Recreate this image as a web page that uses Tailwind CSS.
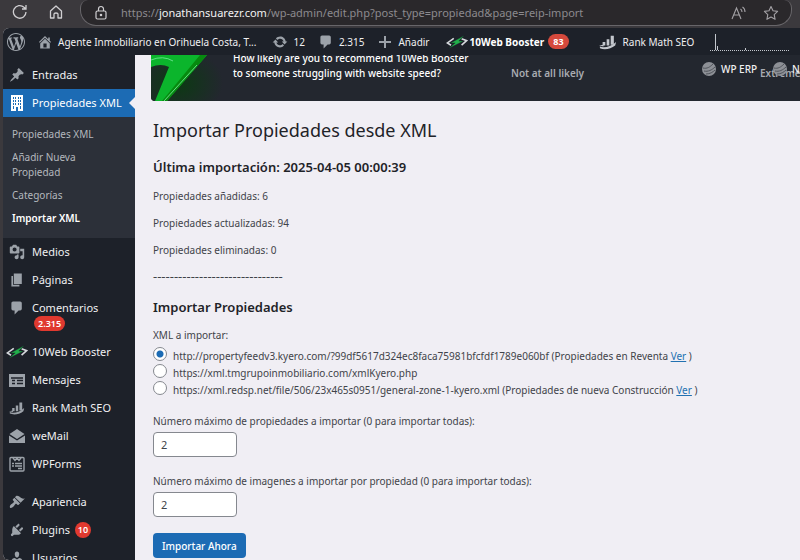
<!DOCTYPE html>
<html lang="es">

<head>
    <meta charset="UTF-8">
    <meta name="viewport" content="width=device-width, initial-scale=1.0">
    <script src="https://cdn.jsdelivr.net/npm/@tailwindcss/browser@4"></script>
    <title>Importar Propiedades desde XML</title>
</head>

<body class="h-screen overflow-hidden flex flex-col bg-[#3b393d] font-['Noto_Sans',sans-serif] text-[10px] leading-4 text-[#3f4349]">

    <!-- shared icons -->
    <svg class="hidden">
        <symbol id="bolt" viewBox="0 0 24 14">
            <path d="M8.500 3 1.500 8l4 2.500M17 3.500l5.500 2L17 10.500" fill="none" stroke="#d5d8dc" stroke-width="1.8" />
            <path d="M20 0 5 8h5L3 14l16-8h-5z" fill="#22b04b" stroke="#1d2129" stroke-width=".4" />
        </symbol>
        <symbol id="rank" viewBox="0 0 20 16">
            <path d="M4 8h3v4H4zM8.500 5h3v7h-3zM13 1h3.500v10H13z" />
            <path d="M1 13c4 2 11 1 18-5l-1 4c-5 4-12 5-17 3zM0 12l5-1v2z" />
        </symbol>
        <symbol id="comment" viewBox="0 0 20 20">
            <path d="M5 2h9c1.100 0 2 .9 2 2v7c0 1.100-.9 2-2 2h-2l-5 5v-5H5c-1.100 0-2-.9-2-2V4c0-1.100.9-2 2-2z" />
        </symbol>
        <symbol id="erp" viewBox="0 0 14 14">
            <circle cx="7" cy="7" r="7" fill="#8d9096" />
            <path d="M1 6c4 1 7-1 10-4M2 9c4 1 8-1 11-4M4 12c4 0 7-2 9-4" fill="none" stroke="#50545b" />
        </symbol>
    </svg>

    <!-- browser bar -->
    <div class="h-7 shrink-0 flex items-start gap-4 pl-3 pr-2">
        <div class="flex gap-5 pt-1 text-[#d0cfd2]">
            <button aria-label="Actualizar">
                <svg class="size-4" viewBox="0 0 16 16" fill="none" stroke="currentColor" stroke-width="1.3"><path d="M14 8a6.300 6.300 0 1 1-2-4.700L14 5M14 1v4h-4" /></svg>
            </button>
            <button aria-label="Inicio">
                <svg class="size-4" viewBox="0 0 16 16" fill="none" stroke="currentColor" stroke-width="1.3" stroke-linejoin="round"><path d="M2.500 7 8 2l5.500 5v7H10v-4q0-1-2-1t-2 1v4H2.500z" /></svg>
            </button>
        </div>
        <div class="flex-1 h-[26px] rounded-b-2xl rounded-t-lg border border-t-0 border-[#68666a] bg-[#2a282b] flex items-center pl-3 pr-3">
            <svg class="size-4 text-[#d0cfd2]" viewBox="0 0 16 16" fill="none" stroke="currentColor" stroke-width="1.2"><rect x="3" y="6" width="10" height="8" rx="1.500" /><path d="M5.500 6V4a2.500 2.500 0 0 1 5 0v2" /><circle cx="8" cy="10" r=".7" fill="currentColor" /></svg>
            <span class="ml-3 text-[11px] text-[#8c8a8e]">https://<span class="text-[#f2f2f2]">jonathansuarezr.com</span>/wp-admin/edit.php?post_type=propiedad&amp;page=reip-import</span>
            <div class="ml-auto flex gap-4 text-[#a3a1a5]">
                <button aria-label="Leer en voz alta">
                    <svg class="size-4" viewBox="0 0 16 16" fill="none" stroke="currentColor" stroke-width="1.1"><path d="M1 14 5.500 3 10 14M2.600 10h5.800M9.500 4q1.500 1 1.500 3M11.500 2q2.500 1.500 2.500 5" /></svg>
                </button>
                <button aria-label="Favoritos">
                    <svg class="size-4" viewBox="0 0 16 16" fill="none" stroke="currentColor" stroke-width="1.1" stroke-linejoin="round"><path d="m8 1.500 2 4.300 4.600.6-3.400 3.200.9 4.700L8 12l-4.100 2.300.9-4.700L1.400 6.400 6 5.800z" /></svg>
                </button>
            </div>
        </div>
    </div>

    <div class="flex-1 min-h-0 ml-[3px] flex flex-col rounded-l-md overflow-hidden bg-[#f0eef4]">

        <!-- admin bar -->
        <header class="relative z-10 h-[27px] shrink-0 flex items-center bg-[#1d2129] pl-1 text-[#f0f0f1] whitespace-nowrap">
            <a href="#" aria-label="WordPress" class="text-[#9ca2a9]">
                <svg class="size-[18px]" viewBox="0 0 20 20" fill="currentColor"><path d="M20 10c0-5.510-4.490-10-10-10C4.480 0 0 4.490 0 10c0 5.520 4.480 10 10 10 5.510 0 10-4.480 10-10zM7.780 15.370L4.370 6.220c.55-.02 1.170-.08 1.170-.08.5-.06.44-1.130-.06-1.110 0 0-1.450.11-2.370.11-.18 0-.37 0-.58-.01C4.120 2.690 6.870 1.110 10 1.110c2.330 0 4.450.87 6.050 2.340-.68-.11-1.650.39-1.650 1.580 0 .74.45 1.360.9 2.100.35.61.55 1.360.55 2.460 0 1.490-1.400 5-1.400 5l-3.030-8.370c.54-.02.82-.17.82-.17.5-.05.44-1.250-.06-1.220 0 0-1.440.12-2.380.12-.87 0-2.330-.12-2.330-.12-.5-.03-.56 1.200-.06 1.220l.92.08 1.260 3.410zM17.410 10c.24-.64.74-1.870.43-4.250.7 1.290 1.050 2.710 1.050 4.250 0 3.290-1.730 6.240-4.400 7.780.97-2.590 1.940-5.200 2.920-7.780zM6.100 18.090C3.120 16.650 1.110 13.530 1.110 10c0-1.300.23-2.480.72-3.590C3.250 10.300 4.670 14.200 6.100 18.090zm4.030-6.630l2.580 6.980c-.86.29-1.760.45-2.710.45-.79 0-1.570-.11-2.290-.33.81-2.380 1.620-4.740 2.420-7.100z" /></svg>
            </a>
            <a href="#" class="ml-3 flex items-center gap-[5px]">
                <svg class="size-4 text-[#9ca2a9]" viewBox="0 0 20 20" fill="currentColor"><path d="M16 8.500l1.530 1.530-1.060 1.060L10 4.600l-6.470 6.490-1.060-1.060L10 2.500l4 4v-2h2v4zm-6-2.460l6 5.990V18H4v-5.970zM12 17v-5H8v5h4z" /></svg>
                Agente Inmobiliario en Orihuela Costa, T...
            </a>
            <a href="#" class="ml-4 flex items-center gap-[5px]">
                <svg class="size-4 text-[#9ca2a9]" viewBox="0 0 20 20" fill="currentColor"><path d="M10.200 3.280c3.530 0 6.430 2.610 6.920 6h2.080l-3.500 4-3.500-4h2.320c-.45-1.970-2.210-3.450-4.320-3.450-1.450 0-2.730.71-3.540 1.780L4.950 5.660C6.230 4.200 8.110 3.280 10.200 3.280zm-.4 13.440c-3.520 0-6.430-2.610-6.920-6H.8l3.500-4c1.170 1.330 2.330 2.670 3.500 4H5.480c.45 1.970 2.210 3.450 4.320 3.450 1.450 0 2.730-.71 3.540-1.780l1.710 1.950c-1.280 1.460-3.150 2.380-5.250 2.380z" /></svg>
                12
            </a>
            <a href="#" class="ml-[13px] flex items-center gap-[5px]">
                <svg class="size-4 text-[#9ca2a9]" fill="currentColor"><use href="#comment" /></svg>
                2.315
            </a>
            <a href="#" class="ml-[13px] flex items-center gap-[5px]">
                <svg class="size-4 text-[#9ca2a9]" viewBox="0 0 16 16" fill="currentColor"><path d="M7 2h2v5h5v2H9v5H7V9H2V7h5z" /></svg>
                Añadir
            </a>
            <a href="#" class="ml-4 flex items-center gap-0.5 font-bold text-white">
                <svg class="w-[22px] h-3.5"><use href="#bolt" /></svg>
                10Web Booster
                <span class="ml-0.5 rounded-full bg-[#d5493c] px-[5px] text-[9px] leading-[15px]">83</span>
            </a>
            <a href="#" class="ml-[30px] flex items-center gap-1.5">
                <svg class="w-[18px] h-4 text-[#c3c7cd]" fill="currentColor"><use href="#rank" /></svg>
                Rank Math SEO
            </a>
            <svg class="ml-4 w-20 h-5 shrink-0" viewBox="0 0 80 20" fill="none" stroke="#c3c7cd"><path d="M0 18.500h80" stroke-dasharray="1 1" /><path d="M5.500 18V2M7.500 18v-4M35.500 18v-2" /></svg>

            <!-- items that wrap below the bar -->
            <div class="absolute top-full right-0 w-[98px] pt-1.5 flex gap-4 overflow-hidden">
                <a href="#" class="shrink-0 flex items-center gap-[5px] font-medium"><svg class="size-3.5"><use href="#erp" /></svg>WP ERP</a>
                <a href="#" class="shrink-0 flex items-center gap-[5px] font-medium"><svg class="size-3.5"><use href="#erp" /></svg>News</a>
            </div>
        </header>

        <div class="flex-1 min-h-0 flex">

            <!-- side menu -->
            <nav class="w-[132px] shrink-0 overflow-hidden bg-[#1d2129] pt-1.5 text-[11px] text-[#f0f0f1]">
                <a href="#" class="flex h-7 items-center gap-[7px] pl-1.5">
                    <svg class="size-4 text-[#9ca2a9]" viewBox="0 0 20 20" fill="currentColor"><path d="M10.440 3.020l1.820-1.820 6.360 6.350-1.830 1.820c-1.050-.68-2.480-.57-3.410.36l-.75.75c-.92.93-1.040 2.350-.35 3.410l-1.830 1.820-2.410-2.410-2.800 2.790c-.42.42-3.380 2.710-3.800 2.290s1.860-3.390 2.280-3.810l2.790-2.790L4.100 9.360l1.830-1.820c1.050.69 2.480.57 3.400-.36l.75-.75c.93-.92 1.050-2.350.36-3.410z" /></svg>
                    Entradas
                </a>
                <a href="#" class="relative flex h-7 items-center gap-[7px] bg-[#1c6bb4] pl-1.5 whitespace-nowrap text-white">
                    <svg class="size-4" viewBox="0 0 16 16"><path d="M2 0h12v16H2z" fill="#fff" /><path d="M4 2h1v2H4zM6 2h1v2H6zM9 2h1v2H9zM11 2h1v2h-1zM4 5h1v2H4zM6 5h1v2H6zM9 5h1v2H9zM11 5h1v2h-1zM4 8h1v2H4zM6 8h1v2H6zM9 8h1v2H9zM11 8h1v2h-1zM4 11h1v3H4zM11 11h1v3h-1zM7 12h2v4H7z" fill="#1c6bb4" /></svg>
                    Propiedades XML
                    <span class="absolute right-0 top-1/2 -translate-y-1/2 border-y-6 border-r-6 border-y-transparent border-r-[#f0eef4]"></span>
                </a>
                <ul class="bg-[#2c3039] pt-1.5 pb-2 text-[10px] leading-[15px] text-[#b4b8be]">
                    <li class="py-1 pl-[9px] pr-8"><a href="#" class="whitespace-nowrap">Propiedades XML</a></li>
                    <li class="py-1 pl-[9px] pr-8"><a href="#">Añadir Nueva Propiedad</a></li>
                    <li class="py-1 pl-[9px] pr-8"><a href="#">Categorías</a></li>
                    <li class="py-1 pl-[9px] pr-8"><a href="#" class="whitespace-nowrap font-semibold text-white">Importar XML</a></li>
                </ul>
                <a href="#" class="flex h-7 items-center gap-[7px] pl-1.5">
                    <svg class="size-4 text-[#9ca2a9]" viewBox="0 0 20 20" fill="currentColor"><path d="M13 11V4c0-.55-.45-1-1-1h-1.670L9 1H5L3.670 3H2c-.55 0-1 .45-1 1v7c0 .55.45 1 1 1h10c.55 0 1-.45 1-1zM7 4.500c1.380 0 2.500 1.120 2.500 2.500S8.380 9.500 7 9.500 4.500 8.380 4.500 7 5.620 4.500 7 4.500zM14 6h5v10.500c0 1.380-1.120 2.500-2.500 2.500S14 17.880 14 16.500s1.120-2.500 2.500-2.500c.17 0 .34.02.5.05V9h-3V6zm-4 8.050V13h2v3.500c0 1.380-1.120 2.500-2.500 2.500S7 17.880 7 16.500 8.120 14 9.500 14c.17 0 .34.02.5.05z" /></svg>
                    Medios
                </a>
                <a href="#" class="flex h-7 items-center gap-[7px] pl-1.5">
                    <svg class="size-4 text-[#9ca2a9]" viewBox="0 0 20 20" fill="currentColor"><path d="M6 15V2h10v13H6zm-1 1h8v2H3V5h2v11z" /></svg>
                    Páginas
                </a>
                <a href="#" class="flex h-11 items-start gap-[7px] pl-1.5 pt-1.5">
                    <svg class="size-4 text-[#9ca2a9]" fill="currentColor"><use href="#comment" /></svg>
                    <span>Comentarios
                        <span class="ml-0.5 block w-fit rounded-full bg-[#e0392f] px-1 text-[9px] leading-[15px] font-semibold text-white">2.315</span>
                    </span>
                </a>
                <a href="#" class="flex h-7 items-center gap-1 pl-[3px]">
                    <svg class="w-[22px] h-3.5"><use href="#bolt" /></svg>
                    10Web Booster
                </a>
                <a href="#" class="flex h-7 items-center gap-[7px] pl-1.5">
                    <svg class="size-4 text-[#9ca2a9]" viewBox="0 0 16 16"><path d="M0 2h16v13H0z" fill="currentColor" /><path d="M2 6h12M3 8.500h3M3 11.500h3M8 8.500h6M8 11.500h6" stroke="#1d2129" stroke-width="1.5" /></svg>
                    Mensajes
                </a>
                <a href="#" class="flex h-7 items-center gap-[7px] pl-1.5">
                    <svg class="size-4 text-[#9ca2a9]" fill="currentColor"><use href="#rank" /></svg>
                    Rank Math SEO
                </a>
                <a href="#" class="flex h-7 items-center gap-[7px] pl-1.5">
                    <svg class="size-4 text-[#9ca2a9]" viewBox="0 0 16 16" fill="currentColor"><path d="M8 1 .5 6 8 11l7.500-5zM0 7.500V15h16V7.500l-8 5z" /></svg>
                    weMail
                </a>
                <a href="#" class="flex h-7 items-center gap-[7px] pl-1.5">
                    <svg class="size-4 text-[#9ca2a9]" viewBox="0 0 16 16" fill="none" stroke="currentColor" stroke-width="1.4"><rect x="1" y="1.500" width="14" height="13.500" rx="1" /><path d="m4 2 2 2.500L8 2l2 2.500L12 2M3 7.500h2M6 7.500h7M3 10h2M6 10h7M9 12.500h4" /></svg>
                    WPForms
                </a>
                <a href="#" class="mt-2.5 flex h-7 items-center gap-[7px] pl-1.5">
                    <svg class="size-4 text-[#9ca2a9]" viewBox="0 0 20 20" fill="currentColor"><path d="M14.480 11.060L7.410 3.990l1.500-1.500c.5-.56 2.300-.47 3.510.32 1.210.8 1.430 1.280 2.910 2.100 1.180.64 2.450 1.260 4.450.85zm-.71.71L6.700 4.700 4.930 6.470c-.39.39-.39 1.020 0 1.410l1.060 1.060c.39.39.39 1.030 0 1.420-.6.6-1.430 1.110-2.210 1.690-.35.26-.7.53-1.010.84C1.430 14.230.4 16.080 1.400 17.070c.99 1 2.840-.03 4.180-1.360.31-.31.58-.66.85-1.020.57-.78 1.080-1.610 1.690-2.210.39-.39 1.020-.39 1.410 0l1.060 1.060c.39.39 1.020.39 1.410 0z" /></svg>
                    Apariencia
                </a>
                <a href="#" class="flex h-7 items-center gap-[7px] pl-1.5">
                    <svg class="size-4 text-[#9ca2a9]" viewBox="0 0 20 20" fill="currentColor"><path d="M13.110 4.360L9.870 7.600 8 5.730l3.240-3.240c.35-.34 1.050-.2 1.560.32.52.51.66 1.210.31 1.550zm-8 1.770l.91-1.120 9.010 9.010-1.190.84c-.71.71-2.630 1.160-3.820 1.160H6.140L4.900 17.260c-.59.59-1.540.59-2.120 0-.59-.58-.59-1.530 0-2.120l1.240-1.240v-3.880c0-1.130.4-3.190 1.090-3.890zm7.260 3.970l3.240-3.240c.34-.35 1.040-.21 1.550.31.52.51.66 1.210.31 1.550l-3.240 3.250z" /></svg>
                    Plugins
                    <span class="-ml-0.5 min-w-4 rounded-full bg-[#e0392f] text-center text-[9px] leading-4 font-semibold text-white">10</span>
                </a>
                <a href="#" class="flex h-7 items-center gap-[7px] pl-1.5">
                    <svg class="size-4 text-[#9ca2a9]" viewBox="0 0 20 20" fill="currentColor"><path d="M10 9.250c-2.270 0-2.730-3.440-2.730-3.440C7 4.020 7.820 2 9.970 2c2.160 0 2.980 2.020 2.710 3.810 0 0-.41 3.440-2.680 3.440zm0 2.570L12.720 10c2.390 0 4.520 2.330 4.520 4.530v2.490s-3.650 1.130-7.240 1.130c-3.650 0-7.240-1.130-7.240-1.130v-2.490c0-2.250 1.940-4.480 4.470-4.480z" /></svg>
                    Usuarios
                </a>
            </nav>

            <main class="flex-1 min-w-0 overflow-hidden pl-4">
                <!-- 10Web banner, scrolled under the admin bar -->
                <section class="h-[46px] flex items-end overflow-hidden rounded-bl-sm bg-[#23272f] text-white whitespace-nowrap">
                    <svg class="w-[82px] h-[46px] shrink-0" viewBox="0 0 82 46">
                        <defs>
                            <radialGradient id="glow"><stop offset="0" stop-color="#0b3a12" /><stop offset="1" stop-color="#23272f" /></radialGradient>
                        </defs>
                        <ellipse cx="26" cy="28" rx="46" ry="36" fill="url(#glow)" />
                        <path d="M0 0h56L16 46H4L18 12Q10 8 0 12z" fill="#0bb52c" />
                        <path d="M56 0 16 46h-5L49 0z" fill="#078a0f" />
                        <path d="M0 5q12-5 22 1M46 10 13 46" fill="none" stroke="#63e087" />
                    </svg>
                    <p class="w-[278px] shrink-0 pb-5 leading-[15px] font-medium">How likely are you to recommend 10Web Booster<br>to someone struggling with website speed?</p>
                    <div class="flex-1 flex justify-between gap-4 overflow-hidden pb-5 leading-[15px] font-semibold text-[#a9acb2]">
                        <span>Not at all likely</span>
                        <span class="w-10 shrink-0">Extremely likely</span>
                    </div>
                </section>

                <div class="px-0.5 pt-[15px]">
                    <h1 class="text-[18px] leading-7 text-[#1f2328]">Importar Propiedades desde XML</h1>
                    <h2 class="mt-[13px] text-[13px] leading-5 font-semibold text-[#1f2328]">Última importación: 2025-04-05 00:00:39</h2>
                    <p class="mt-[11px]">Propiedades añadidas: 6</p>
                    <p class="mt-[11px]">Propiedades actualizadas: 94</p>
                    <p class="mt-[11px]">Propiedades eliminadas: 0</p>
                    <p class="mt-[10px] text-[13px]">-------------------------------</p>
                    <h2 class="mt-[13px] text-[13px] leading-5 font-semibold text-[#1f2328]">Importar Propiedades</h2>

                    <form class="mt-[10px]">
                        <fieldset>
                            <legend>XML a importar:</legend>
                            <div class="mt-1 flex flex-col whitespace-nowrap">
                                <div class="flex h-[17px] items-start gap-1.5">
                                    <input type="radio" name="xml" id="xml1" checked class="size-[14px] shrink-0 appearance-none rounded-full border border-[#85888f] bg-white checked:bg-[radial-gradient(circle,#1c6bb4_3px,#fff_4px)]">
                                    <label for="xml1" class="leading-[18px]">http://propertyfeedv3.kyero.com/?99df5617d324ec8faca75981bfcfdf1789e060bf (Propiedades en Reventa <a href="#" class="text-[#2271b1] underline">Ver</a> )</label>
                                </div>
                                <div class="flex h-[17px] items-start gap-1.5">
                                    <input type="radio" name="xml" id="xml2" class="size-[14px] shrink-0 appearance-none rounded-full border border-[#85888f] bg-white checked:bg-[radial-gradient(circle,#1c6bb4_3px,#fff_4px)]">
                                    <label for="xml2" class="leading-[18px]">https://xml.tmgrupoinmobiliario.com/xmlKyero.php</label>
                                </div>
                                <div class="flex h-4 items-start gap-1.5">
                                    <input type="radio" name="xml" id="xml3" class="size-[14px] shrink-0 appearance-none rounded-full border border-[#85888f] bg-white checked:bg-[radial-gradient(circle,#1c6bb4_3px,#fff_4px)]">
                                    <label for="xml3" class="leading-[18px]">https://xml.redsp.net/file/506/23x465s0951/general-zone-1-kyero.xml (Propiedades de nueva Construcción <a href="#" class="text-[#2271b1] underline">Ver</a> )</label>
                                </div>
                            </div>
                        </fieldset>
                        <label for="maxProps" class="mt-4 block">Número máximo de propiedades a importar (0 para importar todas):</label>
                        <input type="text" id="maxProps" value="2" class="mt-[3px] block h-[25px] w-[84px] rounded-sm border border-[#85888f] bg-white px-[7px] text-[11px]">
                        <label for="maxImgs" class="mt-4 block">Número máximo de imagenes a importar por propiedad (0 para importar todas):</label>
                        <input type="text" id="maxImgs" value="2" class="mt-[3px] block h-[25px] w-[84px] rounded-sm border border-[#85888f] bg-white px-[7px] text-[11px]">
                        <button type="submit" class="mt-4 h-[25px] rounded-sm bg-[#1c6bb4] px-[9px] font-medium text-white">Importar Ahora</button>
                    </form>
                </div>
            </main>
        </div>
    </div>
</body>

</html>
